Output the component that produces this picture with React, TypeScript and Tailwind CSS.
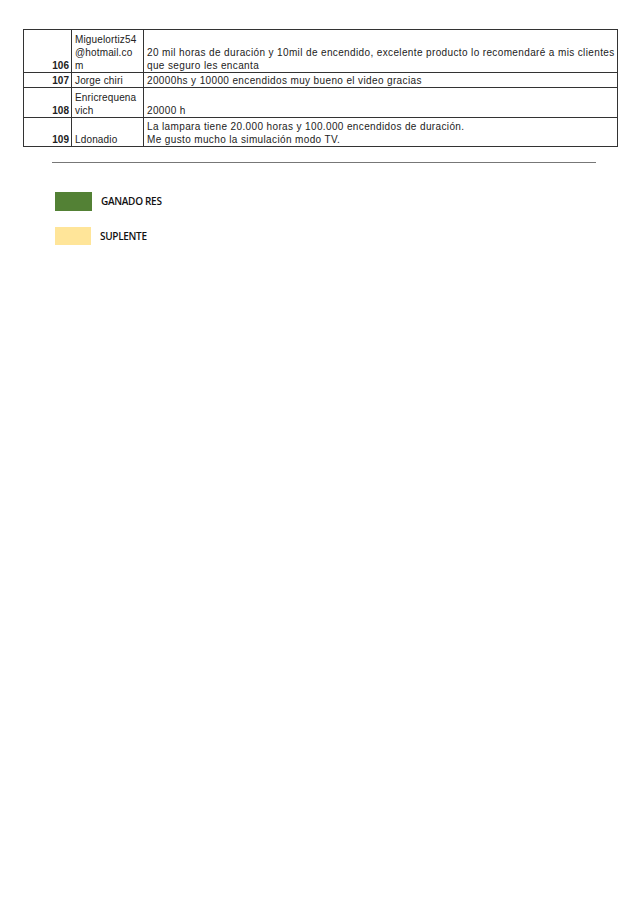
import React from 'react'

type Row = {
  num: string
  name: string[]
  text: string[]
  h: string
}

const rows: Row[] = [
  {
    num: '106',
    name: ['Miguelortiz54', '@hotmail.co', 'm'],
    text: [
      '20 mil horas de duración y 10mil de encendido, excelente producto lo recomendaré a mis clientes',
      'que seguro les encanta',
    ],
    h: 'h-[43px]',
  },
  {
    num: '107',
    name: ['Jorge chiri'],
    text: ['20000hs y 10000 encendidos muy bueno el video gracias'],
    h: 'h-[15px]',
  },
  {
    num: '108',
    name: ['Enricrequena', 'vich'],
    text: ['20000 h'],
    h: 'h-[30px]',
  },
  {
    num: '109',
    name: ['Ldonadio'],
    text: [
      'La lampara tiene 20.000 horas y 100.000 encendidos de duración.',
      'Me gusto mucho la simulación modo TV.',
    ],
    h: 'h-[29px]',
  },
]

const App = () => {
  return (
    <div className="w-[640px] h-[906px] bg-white relative font-['Liberation_Sans',Arial,sans-serif] text-[#222]">
      <div className="pt-[29px] pl-[23px]">
        <table className="border-collapse w-[594px] table-fixed text-[10px] leading-[13px] tracking-[0.37px]">
          <colgroup>
            <col className="w-[48px]" />
            <col className="w-[72px]" />
            <col className="w-[474px]" />
          </colgroup>
          <tbody>
            {rows.map((r) => (
              <tr key={r.num} className={r.h}>
                <td className={`${r.h} border border-[#333] align-bottom text-right font-bold pr-[2px] p-0 tracking-normal`}>
                  {r.num}
                </td>
                <td className="border border-[#333] align-bottom pl-[3px] p-0 tracking-[0.15px]">
                  {r.name.map((n, i) => (
                    <div key={i}>{n}</div>
                  ))}
                </td>
                <td className="border border-[#333] align-bottom pl-[3px] p-0">
                  {r.text.map((t, i) => (
                    <div key={i} className="whitespace-nowrap">{t}</div>
                  ))}
                </td>
              </tr>
            ))}
          </tbody>
        </table>
      </div>

      {/* separator */}
      <div className="mt-[15px] ml-[52px] w-[544px] h-px bg-[#777]" />

      {/* legend */}
      <div className="mt-[29px] ml-[55px] flex flex-col gap-[16px] font-['Open_Sans',sans-serif] text-[10px] font-semibold text-[#111]">
        <div className="flex items-center gap-[9px]">
          <div className="w-[37px] h-[19px] bg-[#538135]" />
          <span className="tracking-[-0.3px]">GANADO RES</span>
        </div>
        <div className="flex items-center gap-[9px]">
          <div className="w-[36px] h-[18px] bg-[#ffe599]" />
          <span className="tracking-[-0.3px]">SUPLENTE</span>
        </div>
      </div>
    </div>
  )
}

export default App
